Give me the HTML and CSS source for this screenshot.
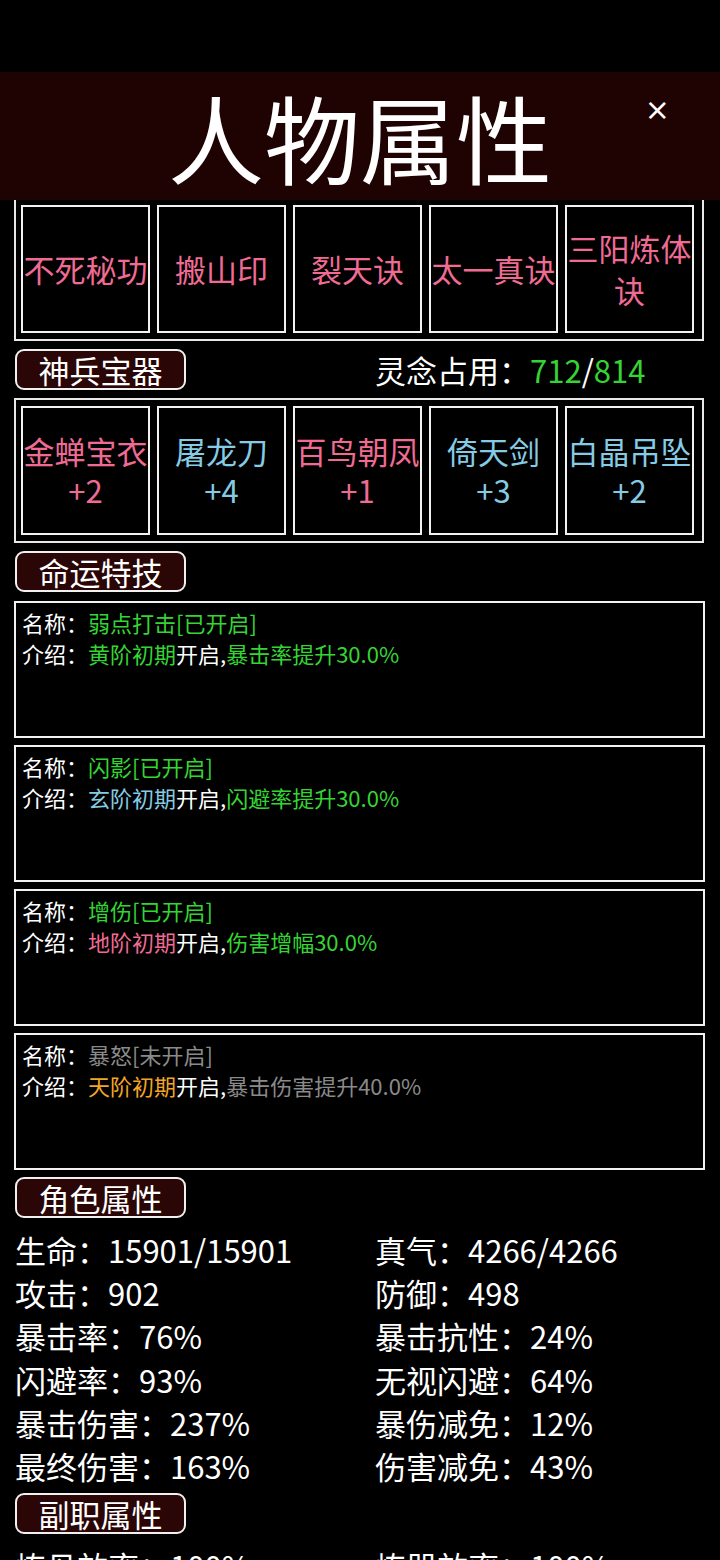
FILE: index.html
```html
<!DOCTYPE html>
<html lang="zh-CN">
<head>
<meta charset="utf-8">
<title>人物属性</title>
<link rel="stylesheet" href="styles.css">
</head>
<body>
<div class="statusbar"></div>
<header class="topbar">
  <div class="topbar-side"></div>
  <h1 class="topbar-title">人物属性</h1>
  <div class="topbar-side topbar-side-end"><span class="close">×</span></div>
</header>
<main class="content">
  <section class="panel panel-cut">
    <div class="slot pink">不死秘功</div>
    <div class="slot pink">搬山印</div>
    <div class="slot pink">裂天诀</div>
    <div class="slot pink">太一真诀</div>
    <div class="slot pink">三阳炼体诀</div>
  </section>

  <div class="section-row">
    <div class="tag">神兵宝器</div>
    <div class="spirit">灵念占用：<span class="green">712</span>/<span class="green">814</span></div>
  </div>

  <section class="panel panel-full">
    <div class="slot slot-gear pink"><span>金蝉宝衣</span><span>+2</span></div>
    <div class="slot slot-gear blue"><span>屠龙刀</span><span>+4</span></div>
    <div class="slot slot-gear pink"><span>百鸟朝凤</span><span>+1</span></div>
    <div class="slot slot-gear blue"><span>倚天剑</span><span>+3</span></div>
    <div class="slot slot-gear blue"><span>白晶吊坠</span><span>+2</span></div>
  </section>

  <div class="section-row">
    <div class="tag">命运特技</div>
  </div>

  <section class="cards">
    <article class="card">
      <p>名称：<span class="green">弱点打击[已开启]</span></p>
      <p>介绍：<span class="green">黄阶初期</span>开启,<span class="green">暴击率提升30.0%</span></p>
    </article>
    <article class="card">
      <p>名称：<span class="green">闪影[已开启]</span></p>
      <p>介绍：<span class="blue">玄阶初期</span>开启,<span class="green">闪避率提升30.0%</span></p>
    </article>
    <article class="card">
      <p>名称：<span class="green">增伤[已开启]</span></p>
      <p>介绍：<span class="pink">地阶初期</span>开启,<span class="green">伤害增幅30.0%</span></p>
    </article>
    <article class="card">
      <p>名称：<span class="gray">暴怒[未开启]</span></p>
      <p>介绍：<span class="orange">天阶初期</span>开启,<span class="gray">暴击伤害提升40.0%</span></p>
    </article>
  </section>

  <div class="section-row">
    <div class="tag">角色属性</div>
  </div>

  <section class="attrs">
    <div>生命：15901/15901</div><div>真气：4266/4266</div>
    <div>攻击：902</div><div>防御：498</div>
    <div>暴击率：76%</div><div>暴击抗性：24%</div>
    <div>闪避率：93%</div><div>无视闪避：64%</div>
    <div>暴击伤害：237%</div><div>暴伤减免：12%</div>
    <div>最终伤害：163%</div><div>伤害减免：43%</div>
  </section>

  <div class="section-row">
    <div class="tag">副职属性</div>
  </div>

  <section class="attrs">
    <div>炼丹效率：100%</div><div>炼器效率：100%</div>
  </section>
</main>
</body>
</html>
```

FILE: styles.css
```css
* { box-sizing: border-box; }

html, body {
  margin: 0;
  padding: 0;
  background: #000;
  color: #fff;
  font-family: "Noto Sans CJK SC", "Noto Sans", sans-serif;
}

body {
  width: 720px;
  height: 1560px;
  overflow: hidden;
}

.statusbar {
  height: 72px;
  background: #000;
}

.topbar {
  height: 128px;
  background: #1f0303;
  display: grid;
  grid-template-columns: 1fr auto 1fr;
  align-items: center;
}

.topbar-title {
  margin: 0;
  font-size: 96px;
  font-weight: 400;
  line-height: 128px;
  color: #fff;
  letter-spacing: 0;
}

.topbar-side-end {
  display: flex;
  justify-content: flex-end;
  align-self: start;
  padding-right: 50px;
  padding-top: 19px;
}

.close {
  font-size: 30px;
  line-height: 38px;
  color: #fff;
  font-weight: 400;
  font-family: "DejaVu Sans", sans-serif;
}

.content {
  padding: 0 16px 0 14px;
}

.panel {
  width: 690px;
  display: flex;
  gap: 7px;
  border: 2px solid #e8e8e8;
  overflow: hidden;
}

.panel-cut {
  border-top: none;
  padding: 5px 5px 6px;
}

.panel-full {
  margin-top: 8px;
  padding: 6px 5px 6px;
}

.slot {
  flex: 0 0 129px;
  height: 128px;
  border: 2px solid #f2f2f2;
  display: flex;
  align-items: center;
  justify-content: center;
  text-align: center;
  font-size: 31px;
  line-height: 42px;
  padding: 0;
}

.slot-gear {
  height: 129px;
  flex-direction: column;
  line-height: 39px;
  padding-bottom: 2px;
}

.slot-gear span { display: block; white-space: nowrap; height: 39px; }

.pink { color: #ef6b93; }
.blue { color: #86cbe4; }
.green { color: #35d435; }
.orange { color: #f2a527; }
.gray { color: #8a8a8a; }

.section-row {
  margin-top: 8px;
  display: grid;
  grid-template-columns: 361px 1fr;
  align-items: center;
}

.tag {
  margin-left: 1px;
  width: 171px;
  height: 41px;
  background: #2a0606;
  border: 2px solid #f0f0f0;
  border-radius: 9px;
  display: flex;
  align-items: center;
  justify-content: center;
  font-size: 31px;
  line-height: 37px;
  color: #fff;
}

.spirit {
  font-size: 31px;
  line-height: 41px;
  color: #fff;
}

.cards {
  margin-top: 9px;
  display: flex;
  flex-direction: column;
  gap: 7px;
}

.card {
  width: 691px;
  height: 137px;
  border: 2px solid #f2f2f2;
  padding: 4px 6px;
}

.card p {
  margin: 0;
  font-size: 22px;
  line-height: 31px;
  color: #fff;
  white-space: nowrap;
}

.cards + .section-row { margin-top: 7px; }

.attrs {
  margin-top: 10px;
  display: grid;
  grid-template-columns: 360px 1fr;
  padding-left: 1px;
  font-size: 31px;
  line-height: 43.2px;
  color: #fff;
}

.attrs + .section-row { margin-top: 6px; }
```
